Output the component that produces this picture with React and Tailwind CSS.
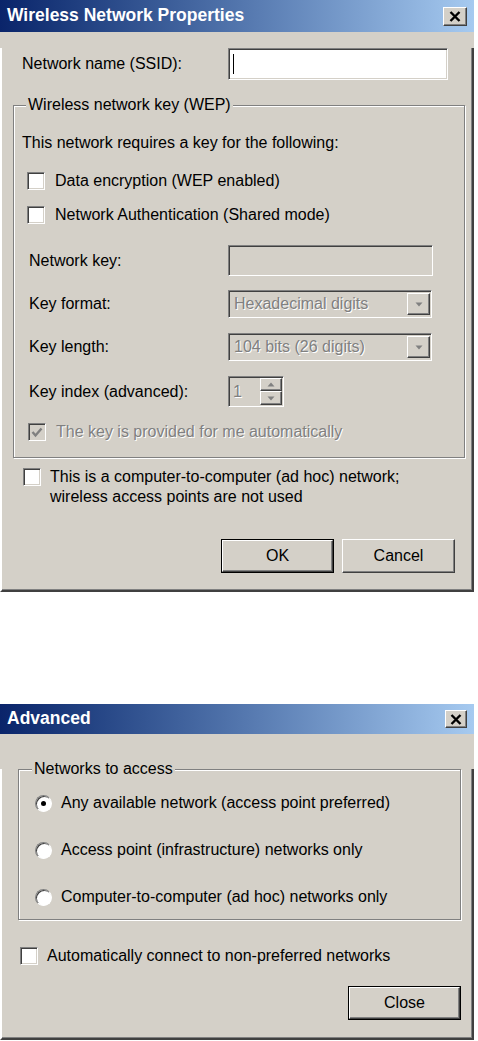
const FONT = "font-['Liberation_Sans',Arial,sans-serif]";
const SUNKEN =
  "border border-t-[#808080] border-l-[#808080] border-r-white border-b-white shadow-[inset_1px_1px_0_#404040,inset_-1px_-1px_0_#d4d0c8]";
const RAISED =
  "border border-t-white border-l-white border-r-[#404040] border-b-[#404040] shadow-[inset_-1px_-1px_0_#808080]";
const DISABLED = "text-[#808080] [text-shadow:1px_1px_0_#fff]";

function CloseBox({ size }) {
  return (
    <div className={`${size} bg-[#d4d0c8] ${RAISED} flex items-center justify-center`}>
      <svg width="12" height="11" viewBox="0 0 12 11">
        <path d="M1.5 1 L10.5 10 M10.5 1 L1.5 10" stroke="#000" strokeWidth="2.4" />
      </svg>
    </div>
  );
}

function Dialog({ title, titleH, closeSize, children }) {
  return (
    <div className="w-[474px] bg-[#d4d0c8]">
      <div
        className={`${titleH} flex items-center justify-between pl-[7px] pr-[7px] bg-gradient-to-r from-[#0a246a] to-[#a6caf0]`}
      >
        <span className="text-white font-bold text-[17.5px] leading-none">{title}</span>
        <CloseBox size={closeSize} />
      </div>
      <div className="border-l-2 border-r-2 border-b-2 border-l-white border-r-[#404040] border-b-[#404040] shadow-[inset_-1px_-1px_0_#808080]">
        {children}
      </div>
    </div>
  );
}

function Check({ checked, disabled }) {
  return (
    <div
      className={`w-[18px] h-[18px] shrink-0 ${SUNKEN} ${disabled ? "bg-[#d4d0c8]" : "bg-white"} flex items-center justify-center`}
    >
      {checked && (
        <svg width="12" height="11" viewBox="0 0 12 11">
          <path d="M1.5 5 L4.5 8.5 L10.5 1.5" fill="none" stroke={disabled ? "#808080" : "#000"} strokeWidth="2.4" />
        </svg>
      )}
    </div>
  );
}

function Radio({ on }) {
  return (
    <div className="w-[17px] h-[17px] shrink-0 rounded-full border border-t-[#808080] border-l-[#808080] border-r-white border-b-white bg-white shadow-[inset_1px_1px_0_#404040] flex items-center justify-center">
      {on && <div className="w-[5px] h-[5px] rounded-full bg-black" />}
    </div>
  );
}

function GroupBox({ label, className, labelLeft, children }) {
  return (
    <div className={`relative border border-[#808080] shadow-[inset_1px_1px_0_#fff,1px_1px_0_#fff] ${className}`}>
      <span className={`absolute -top-[11px] ${labelLeft} px-[2px] bg-[#d4d0c8] leading-[20px]`}>{label}</span>
      {children}
    </div>
  );
}

function Arrow({ up }) {
  return (
    <svg width="8" height="5" viewBox="0 0 8 5">
      <path d={up ? "M4 0.5 L7.5 4.5 L0.5 4.5 Z" : "M0.5 0.5 L7.5 0.5 L4 4.5 Z"} fill="#808080" />
    </svg>
  );
}

function Combo({ value }) {
  return (
    <div className={`w-[204px] h-[28px] ${SUNKEN} bg-[#d4d0c8] flex items-center justify-between pl-[5px] pr-[1px]`}>
      <span className={DISABLED}>{value}</span>
      <div className={`w-[23px] h-[22px] bg-[#d4d0c8] ${RAISED} flex items-center justify-center`}>
        <Arrow />
      </div>
    </div>
  );
}

function Button({ children, def }) {
  return (
    <div className={`${def ? "border border-black" : ""} w-[113px] h-[34px]`}>
      <div className={`w-full h-full bg-[#d4d0c8] ${RAISED} flex items-center justify-center`}>{children}</div>
    </div>
  );
}

function FieldRow({ label, children, mt }) {
  return (
    <div className={`flex items-center ${mt}`}>
      <span className="w-[214px] pl-[15px] shrink-0">{label}</span>
      {children}
    </div>
  );
}

export default function App() {
  return (
    <div className={`${FONT} text-[16px] leading-[20px] text-black bg-white w-[478px] h-[1041px]`}>
      <Dialog title="Wireless Network Properties" titleH="h-[32px]" closeSize="w-[24px] h-[19px]">
        <div className="flex items-center mt-[16px]">
          <span className="w-[226px] pl-[20px] shrink-0">Network name (SSID):</span>
          <div className={`w-[220px] h-[32px] ${SUNKEN} bg-white flex items-center pl-[4px]`}>
            <div className="w-px h-[20px] bg-black" />
          </div>
        </div>

        <GroupBox label="Wireless network key (WEP)" labelLeft="left-[12px]" className="ml-[11px] w-[452px] mt-[25px] pb-[15px]">
          <div className="flex flex-col">
            <div className="mt-[27px] pl-[8px]">This network requires a key for the following:</div>
            <div className="mt-[18px] pl-[13px] flex items-center gap-[10px]">
              <Check />
              <span>Data encryption (WEP enabled)</span>
            </div>
            <div className="mt-[14px] pl-[13px] flex items-center gap-[10px]">
              <Check />
              <span>Network Authentication (Shared mode)</span>
            </div>
            <FieldRow label="Network key:" mt="mt-[20px]">
              <div className={`w-[205px] h-[31px] ${SUNKEN} bg-[#d4d0c8]`} />
            </FieldRow>
            <FieldRow label="Key format:" mt="mt-[14px]">
              <Combo value="Hexadecimal digits" />
            </FieldRow>
            <FieldRow label="Key length:" mt="mt-[15px]">
              <Combo value="104 bits (26 digits)" />
            </FieldRow>
            <FieldRow label="Key index (advanced):" mt="mt-[15px]">
              <div className={`w-[56px] h-[31px] ${SUNKEN} bg-[#d4d0c8] flex items-center justify-between pl-[4px] pr-[1px]`}>
                <span className={DISABLED}>1</span>
                <div className="flex flex-col">
                  <div className={`w-[22px] h-[13px] bg-[#d4d0c8] ${RAISED} flex items-center justify-center`}>
                    <Arrow up />
                  </div>
                  <div className={`w-[22px] h-[14px] bg-[#d4d0c8] ${RAISED} flex items-center justify-center`}>
                    <Arrow />
                  </div>
                </div>
              </div>
            </FieldRow>
            <div className="mt-[15px] pl-[14px] flex items-center gap-[10px]">
              <Check checked disabled />
              <span className={DISABLED}>The key is provided for me automatically</span>
            </div>
          </div>
        </GroupBox>

        <div className="mt-[9px] pl-[21px] flex items-start gap-[9px]">
          <div className="mt-[1px]">
            <Check />
          </div>
          <span>
            This is a computer-to-computer (ad hoc) network;
            <br />
            wireless access points are not used
          </span>
        </div>

        <div className="flex justify-end gap-[8px] mt-[32px] pr-[17px] pb-[17px]">
          <Button def>OK</Button>
          <Button>Cancel</Button>
        </div>
      </Dialog>

      <div className="h-[112px]" />

      <Dialog title="Advanced" titleH="h-[30px]" closeSize="w-[22px] h-[18px]">
        <GroupBox label="Networks to access" labelLeft="left-[13px]" className="ml-[16px] w-[443px] mt-[35px] pb-[12px]">
          <div className="flex flex-col pl-[16px]">
            <div className="mt-[23px] flex items-center gap-[9px]">
              <Radio on />
              <span>Any available network (access point preferred)</span>
            </div>
            <div className="mt-[27px] flex items-center gap-[9px]">
              <Radio />
              <span>Access point (infrastructure) networks only</span>
            </div>
            <div className="mt-[27px] flex items-center gap-[9px]">
              <Radio />
              <span>Computer-to-computer (ad hoc) networks only</span>
            </div>
          </div>
        </GroupBox>
        <div className="mt-[26px] pl-[18px] flex items-center gap-[9px]">
          <Check />
          <span>Automatically connect to non-preferred networks</span>
        </div>
        <div className="flex justify-end mt-[20px] pr-[11px] pb-[18px]">
          <Button def>Close</Button>
        </div>
      </Dialog>
    </div>
  );
}
